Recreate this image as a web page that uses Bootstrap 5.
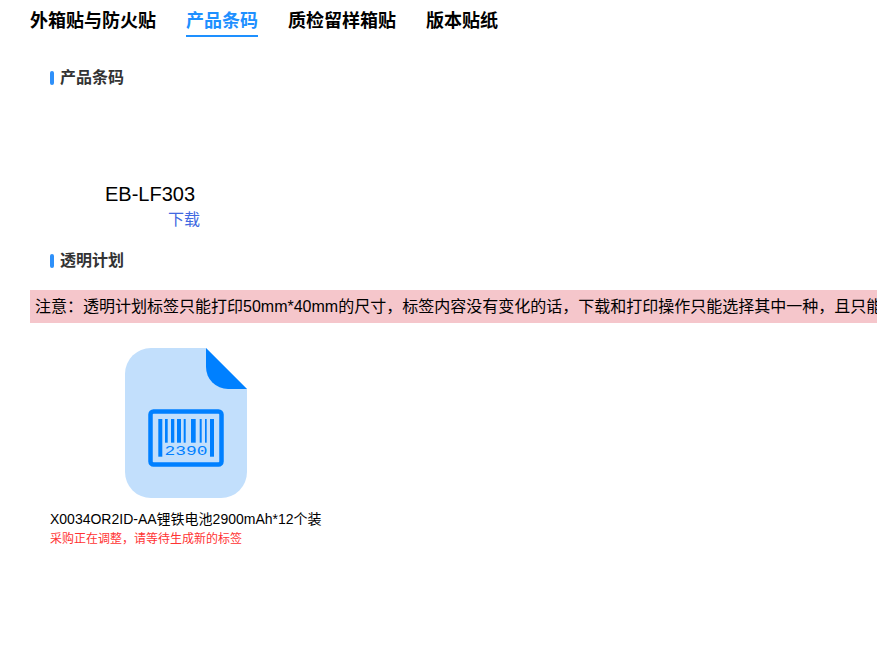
<!DOCTYPE html>
<html lang="zh-CN">
<head>
<meta charset="utf-8">
<title>产品条码</title>
<link href="https://cdn.jsdelivr.net/npm/bootstrap@5.3.0/dist/css/bootstrap.min.css" rel="stylesheet">
<style>
html,body{background:#fff;overflow:hidden;}
body{font-family:"Liberation Sans","Noto Sans CJK SC",sans-serif;color:#000;}
.tabbar{gap:30px;padding:10px 0 0 30px;height:37px;}
.tabitem{font-size:18px;font-weight:700;line-height:23px;height:27px;color:#000;text-decoration:none;border-bottom:2px solid transparent;}
.tabitem.on{color:#1e90ff;border-bottom-color:#1e90ff;}
.sect{margin:0;padding-left:50px;font-size:16px;font-weight:700;line-height:20px;color:#333;gap:6px;}
.sect-bar{width:4px;height:14px;background:#2e90fa;border-radius:2px;}
.sect-one{margin-top:31px;}
.codebox{padding:94px 0 0 105px;}
.codename{font-size:20px;line-height:24px;}
.codelink{display:block;font-size:16px;line-height:20px;margin:4px 0 0 63px;color:#4169e1;text-decoration:none;}
.sect-two{margin-top:21px;}
.notice{margin:19px 0 0 30px;padding:0 5px;height:33px;line-height:33px;font-size:16px;white-space:nowrap;background:#f5c6cb;width:1400px;}
.filebox{margin:25px 0 0 50px;width:300px;}
.fileicon{display:block;margin-left:75px;width:122px;height:150px;}
.filename{font-size:14px;line-height:18px;margin-top:12px;white-space:nowrap;}
.filewarn{font-size:12px;line-height:19px;margin-top:2px;color:#ff3333;white-space:nowrap;}
</style>
</head>
<body>
<div class="overflow-hidden">
  <nav class="d-flex tabbar">
    <a class="tabitem" href="#">外箱贴与防火贴</a>
    <a class="tabitem on" href="#">产品条码</a>
    <a class="tabitem" href="#">质检留样箱贴</a>
    <a class="tabitem" href="#">版本贴纸</a>
  </nav>
  <h2 class="sect sect-one d-flex align-items-center"><span class="sect-bar"></span>产品条码</h2>
  <div class="codebox">
    <div class="codename">EB-LF303</div>
    <a class="codelink" href="#">下载</a>
  </div>
  <h2 class="sect sect-two d-flex align-items-center"><span class="sect-bar"></span>透明计划</h2>
  <div class="notice">注意&#xFF1A;透明计划标签只能打印50mm*40mm的尺寸&#xFF0C;标签内容没有变化的话&#xFF0C;下载和打印操作只能选择其中一种&#xFF0C;且只能操作一次</div>
  <div class="filebox">
    <svg class="fileicon" viewBox="0 0 122 150" aria-hidden="true">
      <path d="M26 0H81L122 41V124A26 26 0 0 1 96 150H26A26 26 0 0 1 0 124V26A26 26 0 0 1 26 0Z" fill="#c2dffc"/>
      <path d="M81 0L122 41H103A22 22 0 0 1 81 19Z" fill="#0080ff"/>
      <rect x="25.500" y="63.500" width="71" height="53" rx="3" fill="none" stroke="#0080ff" stroke-width="4.500"/>
      <g fill="#0080ff">
        <rect x="33.300" y="71" width="4" height="37.700"/>
        <rect x="40" y="71" width="2.700" height="23.700"/>
        <rect x="46" y="71" width="3.300" height="23.700"/>
        <rect x="52" y="71" width="4" height="23.700"/>
        <rect x="58.700" y="71" width="2" height="23.700"/>
        <rect x="66" y="71" width="4.700" height="23.700"/>
        <rect x="74.700" y="71" width="2" height="23.700"/>
        <rect x="80" y="71" width="1.700" height="23.700"/>
        <rect x="85" y="71" width="4" height="37.700"/>
      </g>
      <text x="39.500" y="107" font-family="Liberation Mono,monospace" font-size="13" textLength="43" lengthAdjust="spacingAndGlyphs" fill="#0080ff">2390</text>
    </svg>
    <div class="filename">X0034OR2ID-AA锂铁电池2900mAh*12个装</div>
    <div class="filewarn">采购正在调整&#xFF0C;请等待生成新的标签</div>
  </div>
</div>
<script src="https://cdn.jsdelivr.net/npm/bootstrap@5.3.0/dist/js/bootstrap.bundle.min.js"></script>
</body>
</html>
